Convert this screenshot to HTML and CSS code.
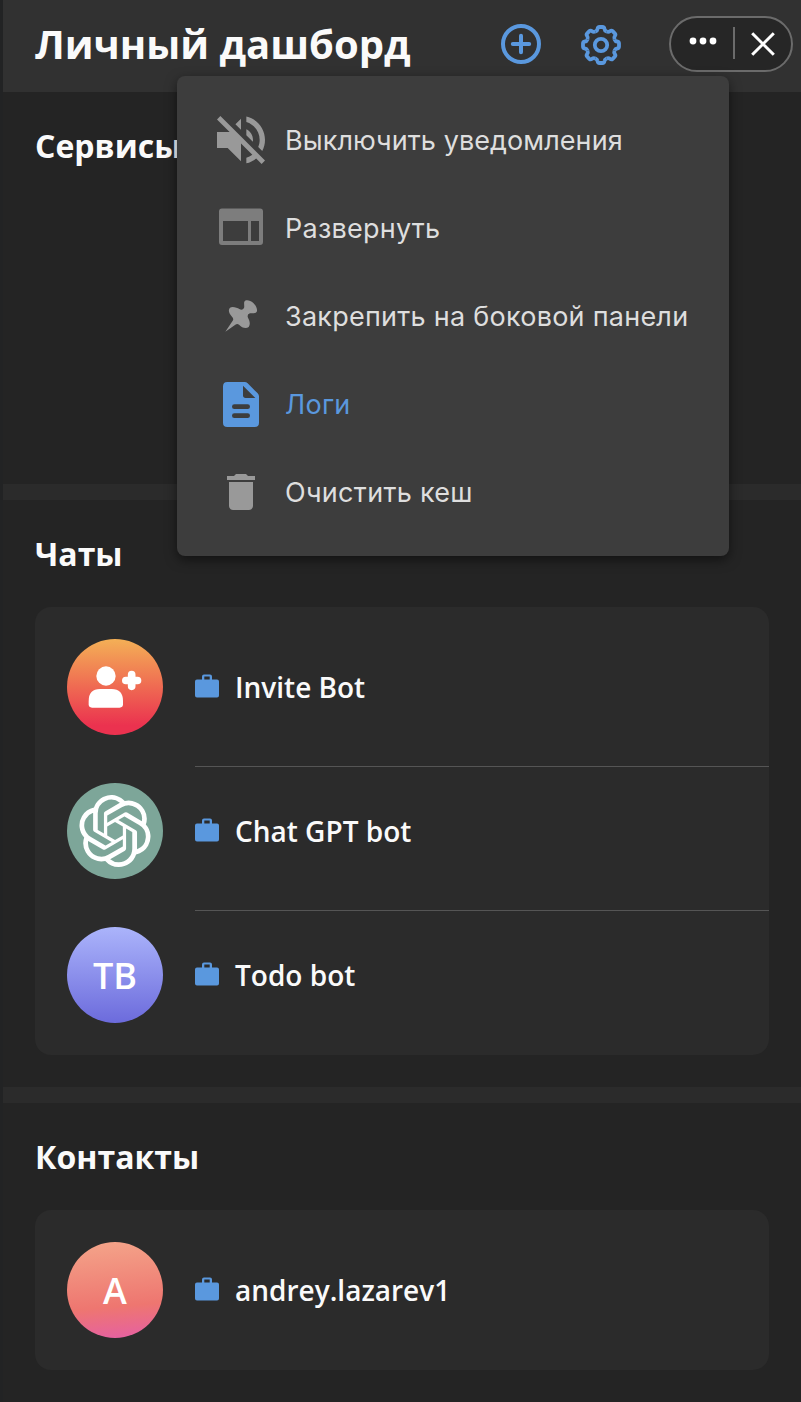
FILE: index.html
```html
<!DOCTYPE html>
<html lang="ru">
<head>
<meta charset="utf-8">
<title>Личный дашборд</title>
<link rel="stylesheet" href="styles.css">
</head>
<body>
<svg width="0" height="0" class="defs">
  <symbol id="case" viewBox="0 0 24 24">
    <path fill="currentColor" fill-rule="evenodd" d="M7 5.500V2.500Q7 .5 9 .5h6q2 0 2 2v3h5q2 0 2 2v14q0 2-2 2H2q-2 0-2-2v-14q0-2 2-2zM9.300 2.600v2.900h5.400V2.600z"/>
  </symbol>
</svg>
<div class="app">
  <header class="header">
    <h1 class="title">Личный дашборд</h1>
    <div class="actions">
      <svg class="action" viewBox="-20 -20 40 40" fill="none" stroke="currentColor" stroke-width="4" stroke-linecap="round">
        <circle r="18"/><path d="M-8.200 0H8.200M0-8.200V8.200"/>
      </svg>
      <svg class="action gear" viewBox="-20 -20 40 40" fill="none" stroke="currentColor" stroke-width="3.8" stroke-linejoin="round">
        <circle r="6.200"/>
        <path id="t" d="M-5.600-13.500C-4-14.200-3.600-15-3.500-16Q-3.200-18-1.500-18H1.500Q3.200-18 3.500-16C3.600-15 4-14.200 5.600-13.500"/>
        <use href="#t" transform="rotate(45)"/><use href="#t" transform="rotate(90)"/><use href="#t" transform="rotate(135)"/>
        <use href="#t" transform="rotate(180)"/><use href="#t" transform="rotate(225)"/><use href="#t" transform="rotate(270)"/><use href="#t" transform="rotate(315)"/>
      </svg>
      <div class="pill">
        <svg class="dots" viewBox="0 0 28 8" fill="#fff"><circle cx="4" cy="4" r="3.400"/><circle cx="14" cy="4" r="3.400"/><circle cx="24" cy="4" r="3.400"/></svg>
        <span class="sep"></span>
        <svg class="close" viewBox="0 0 24 24" stroke="#fff" stroke-width="3"><path d="M1.200 1.200 22.800 22.800M22.800 1.200 1.200 22.800"/></svg>
      </div>
    </div>
  </header>

  <main>
    <section class="section services"><h2 class="heading">Сервисы</h2></section>
    <section class="section chats">
      <h2 class="heading">Чаты</h2>
      <div class="card">
        <div class="row">
          <div class="avatar invite">
            <svg viewBox="0 0 288 288" fill="#fff"><circle cx="117" cy="111" r="29"/><path d="M65 186q0-36 34-36h35q34 0 34 36v10q0 10-10 10H75q-10 0-10-10z"/><path d="M194 107v35M176.500 124.500h35" stroke="#fff" stroke-width="23" stroke-linecap="round"/></svg>
          </div>
          <div class="info"><svg class="case"><use href="#case"/></svg><span>Invite Bot</span></div>
        </div>
        <div class="row">
          <div class="avatar gpt">
            <svg class="knot" viewBox="0 0 24 24" fill="#fff"><path d="M22.2819 9.8211a5.9847 5.9847 0 0 0-.5157-4.9108 6.0462 6.0462 0 0 0-6.5098-2.9A6.0651 6.0651 0 0 0 4.9807 4.1818a5.9847 5.9847 0 0 0-3.9977 2.9 6.0462 6.0462 0 0 0 .7427 7.0966 5.98 5.98 0 0 0 .511 4.9107 6.051 6.051 0 0 0 6.5146 2.9001A5.9847 5.9847 0 0 0 13.2599 24a6.0557 6.0557 0 0 0 5.7718-4.2058 5.9894 5.9894 0 0 0 3.9977-2.9001 6.0557 6.0557 0 0 0-.7475-7.0729zm-9.022 12.6081a4.4755 4.4755 0 0 1-2.8764-1.0408l.1419-.0804 4.7783-2.7582a.7948.7948 0 0 0 .3927-.6813v-6.7369l2.02 1.1686a.071.071 0 0 1 .038.052v5.5826a4.504 4.504 0 0 1-4.4945 4.4944zm-9.6607-4.1254a4.4708 4.4708 0 0 1-.5346-3.0137l.142.0852 4.783 2.7582a.7712.7712 0 0 0 .7806 0l5.8428-3.3685v2.3324a.0804.0804 0 0 1-.0332.0615L9.74 19.9502a4.4992 4.4992 0 0 1-6.1408-1.6464zM2.3408 7.8956a4.485 4.485 0 0 1 2.3655-1.9728V11.6a.7664.7664 0 0 0 .3879.6765l5.8144 3.3543-2.0201 1.1685a.0757.0757 0 0 1-.071 0l-4.8303-2.7865A4.504 4.504 0 0 1 2.3408 7.872zm16.5963 3.8558L13.1038 8.364 15.1192 7.2a.0757.0757 0 0 1 .071 0l4.8303 2.7913a4.4944 4.4944 0 0 1-.6765 8.1042v-5.6772a.79.79 0 0 0-.407-.667zm2.0107-3.0231l-.142-.0852-4.7735-2.7818a.7759.7759 0 0 0-.7854 0L9.409 9.2297V6.8974a.0662.0662 0 0 1 .0284-.0615l4.8303-2.7866a4.4992 4.4992 0 0 1 6.6802 4.66zM8.3065 12.863l-2.02-1.1638a.0804.0804 0 0 1-.038-.0567V6.0742a4.4992 4.4992 0 0 1 7.3757-3.4537l-.142.0805L8.704 5.459a.7948.7948 0 0 0-.3927.6813zm1.0976-2.3654l2.602-1.4998 2.6069 1.4998v2.9994l-2.5974 1.4997-2.6067-1.4997Z"/></svg>
          </div>
          <div class="info"><svg class="case"><use href="#case"/></svg><span>Chat GPT bot</span></div>
        </div>
        <div class="row">
          <div class="avatar todo">TB</div>
          <div class="info"><svg class="case"><use href="#case"/></svg><span>Todo bot</span></div>
        </div>
      </div>
    </section>
    <section class="section contacts">
      <h2 class="heading">Контакты</h2>
      <div class="card">
        <div class="row">
          <div class="avatar person">A</div>
          <div class="info"><svg class="case"><use href="#case"/></svg><span>andrey.lazarev1</span></div>
        </div>
      </div>
    </section>
  </main>
</div>

<nav class="menu">
  <div class="item mute">
    <svg class="icon" viewBox="0 0 24 24" fill="currentColor"><path d="M16.500 12c0-1.770-1.020-3.290-2.500-4.030v2.210l2.450 2.450c.03-.2.05-.41.05-.63zm2.500 0c0 .94-.2 1.820-.54 2.640l1.510 1.510C20.630 14.910 21 13.500 21 12c0-4.280-2.990-7.860-7-8.770v2.060c2.890.86 5 3.540 5 6.710zM4.270 3L3 4.270 7.730 9H3v6h4l5 5v-6.730l4.250 4.250c-.67.52-1.420.93-2.250 1.180v2.060c1.380-.31 2.630-.95 3.690-1.810L19.730 21 21 19.730l-9-9L4.270 3zM12 4L9.910 6.090 12 8.180V4z"/></svg>
    <span>Выключить уведомления</span>
  </div>
  <div class="item">
    <svg class="icon window" viewBox="0 0 64 64" fill="currentColor" fill-rule="evenodd"><path d="M13 12.500h38q3 0 3 3v30.500q0 3-3 3H13q-3 0-3-3v-30.500q0-3 3-3zM14 25v20h25V25zM42 25v20h8V25z"/></svg>
    <span>Развернуть</span>
  </div>
  <div class="item">
    <svg class="icon" viewBox="27 12 192 192" fill="currentColor"><path d="M76 155 97 124Q103 117 96 110C86 101 84 89 90 83 97 78 112 83 118 87Q127 92 132 84C134 80 131 70 133 65 137 58 150 60 160 69 170 78 174 92 169 97 164 102 156 98 150 100Q140 103 144 113C149 122 152 133 146 141 138 147 125 143 117 134Q112 130 106 134Z"/></svg>
    <span>Закрепить на боковой панели</span>
  </div>
  <div class="item active">
    <svg class="icon" viewBox="27 276 192 192" fill="currentColor" fill-rule="evenodd"><path d="M82 306h52q5 0 9 4l30 30q4 4 4 9v79q0 13-13 13H82q-13 0-13-13V319q0-13 13-13zM129 317v29q0 8 8 8h29zM103 373q-7 0-7 7t7 7h40q7 0 7-7t-7-7zM103 400q-7 0-7 7t7 7h40q7 0 7-7t-7-7z"/></svg>
    <span>Логи</span>
  </div>
  <div class="item clear">
    <svg class="icon" viewBox="-4 -4 32 32" fill="currentColor"><path d="M6 19c0 1.100.9 2 2 2h8c1.100 0 2-.9 2-2V7H6v12zM19 4h-3.500l-1-1h-5l-1 1H5v2h14V4z"/></svg>
    <span>Очистить кеш</span>
  </div>
</nav>
</body>
</html>
```
FILE: styles.css
```css
* { box-sizing: border-box; }
body {
  margin: 0;
  background: #242424;
  color: #fafafa;
  font-family: "Open Sans", sans-serif;
}
.defs { position: absolute; }
svg { display: block; flex: none; }
.app {
  height: 1402px;
  overflow: hidden;
  border-left: 3px solid #222324;
}
.header {
  display: flex;
  align-items: center;
  justify-content: space-between;
  height: 92px;
  padding: 0 8px 4px 32px;
  background: #313131;
}
.title { margin: 0; font-size: 40px; line-height: 54px; font-weight: 700; white-space: nowrap; }
.actions { display: flex; align-items: center; color: #5a98de; }
.action { width: 40px; height: 40px; margin-right: 40px; }
.gear { margin-right: 48px; margin-top: 2px; }
.pill {
  display: flex;
  align-items: center;
  width: 124px;
  height: 56px;
  padding-left: 18px;
  border: 2px solid #6b6b6b;
  border-radius: 28px;
  background: #262626;
}
.dots { width: 28px; height: 8px; margin-bottom: 6px; }
.sep { width: 2px; height: 32px; margin: 0 16px 2px 16px; background: #6b6b6b; }
.close { width: 24px; height: 24px; }
.section { padding: 0 32px 32px; }
.services { height: 392px; padding-top: 32px; }
.chats { height: 603px; border-top: 16px solid #2b2b2b; padding-top: 32px; }
.contacts { border-top: 16px solid #2b2b2b; padding-top: 32px; }
.heading { margin: 0 0 31px; font-size: 32px; line-height: 44px; font-weight: 700; }
.card { border-radius: 16px; background: #2b2b2b; }
.row { display: flex; height: 144px; padding: 16px 0 0 32px; }
.row:first-child { height: 160px; padding-top: 32px; }
.avatar {
  display: flex;
  align-items: center;
  justify-content: center;
  width: 96px;
  height: 96px;
  margin-right: 32px;
  border-radius: 50%;
  font-size: 36px;
  font-weight: 600;
  color: #fff;
}
.invite { background: linear-gradient(#f4b056, #eb324f 90%); }
.invite svg { width: 96px; height: 96px; }
.gpt { background: #7da699; }
.knot { width: 72px; height: 72px; }
.todo { background: linear-gradient(#abb4fb, #6c6bdc); }
.person { background: linear-gradient(175deg, #f4a58a, #ee7670 66%, #e55fa5); }
.info {
  display: flex;
  align-items: center;
  gap: 16px;
  flex: 1;
  padding-bottom: 31px;
  border-bottom: 1px solid #555;
  font-size: 28px;
  font-weight: 600;
}
.row:last-child .info { border-color: transparent; }
.case { width: 24px; height: 24px; margin-bottom: 2px; color: #5a98de; }
.menu {
  position: absolute;
  left: 177px;
  top: 76px;
  width: 552px;
  height: 480px;
  padding: 20px 32px;
  border-radius: 8px;
  background: #3d3d3d;
  box-shadow: 0 4px 12px rgba(0, 0, 0, .5);
  color: #dedede;
  font: 400 27px "Inter", sans-serif;
  letter-spacing: .25px;
}
.item { display: flex; align-items: center; gap: 12px; height: 88px; white-space: nowrap; }
.item span { padding-top: 1px; }
.mute { letter-spacing: .07px; }
.clear { letter-spacing: .3px; }
.icon { width: 64px; height: 64px; color: #999; }
.window { color: #7d7d7d; }
.active, .active .icon { color: #5a98de; }
```
